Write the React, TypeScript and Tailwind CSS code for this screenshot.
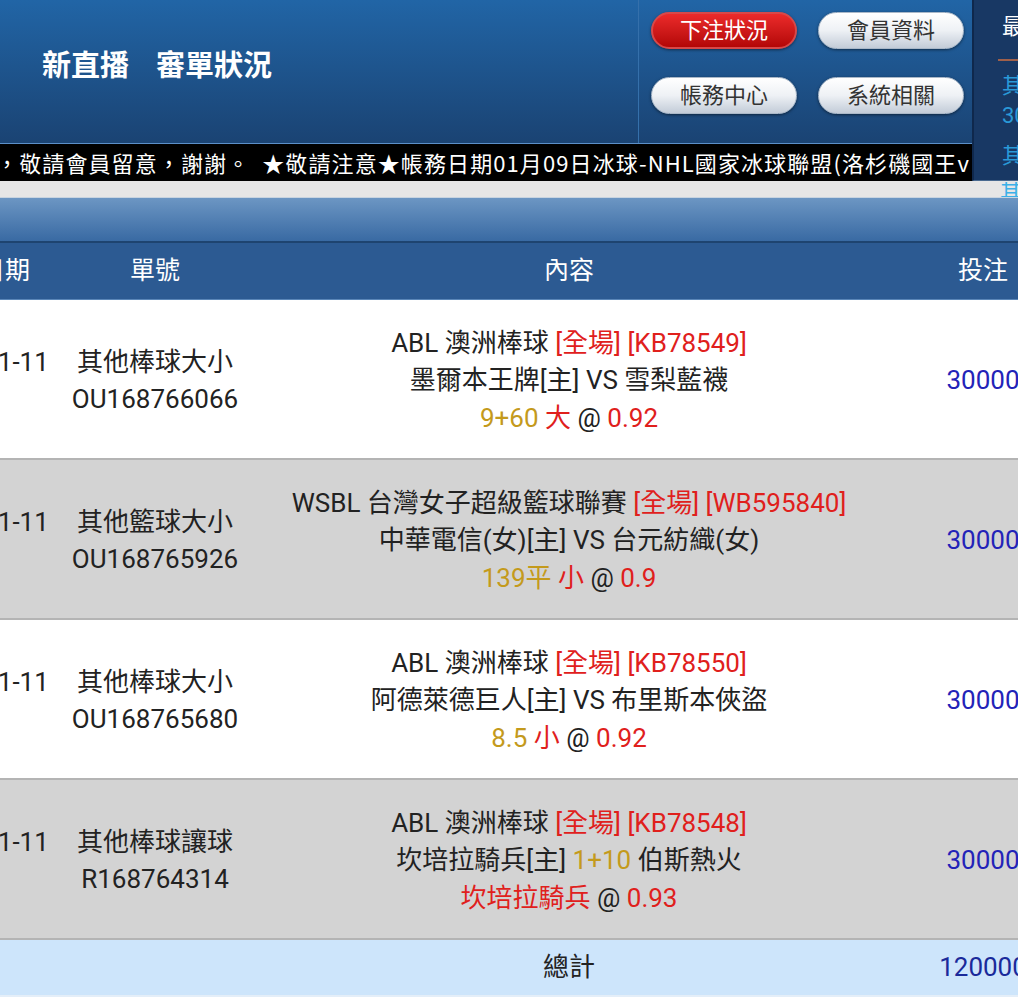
import type { ReactNode } from "react";

const gold = "text-[#c49a1c]";
const red = "text-[#e0201c]";

type Row = {
  date: string;
  type: string;
  no: string;
  league: string;
  code: string;
  teams: ReactNode;
  pick: ReactNode;
  amount: string;
  gray: boolean;
};

const rows: Row[] = [
  {
    date: "01-11",
    type: "其他棒球大小",
    no: "OU168766066",
    league: "ABL 澳洲棒球",
    code: "[KB78549]",
    teams: <>墨爾本王牌[主] VS 雪梨藍襪</>,
    pick: (
      <>
        <span className={gold}>9+60</span> <span className={red}>大</span> @{" "}
        <span className={red}>0.92</span>
      </>
    ),
    amount: "30000",
    gray: false,
  },
  {
    date: "01-11",
    type: "其他籃球大小",
    no: "OU168765926",
    league: "WSBL 台灣女子超級籃球聯賽",
    code: "[WB595840]",
    teams: <>中華電信(女)[主] VS 台元紡織(女)</>,
    pick: (
      <>
        <span className={gold}>139平</span> <span className={red}>小</span> @{" "}
        <span className={red}>0.9</span>
      </>
    ),
    amount: "30000",
    gray: true,
  },
  {
    date: "01-11",
    type: "其他棒球大小",
    no: "OU168765680",
    league: "ABL 澳洲棒球",
    code: "[KB78550]",
    teams: <>阿德萊德巨人[主] VS 布里斯本俠盜</>,
    pick: (
      <>
        <span className={gold}>8.5</span> <span className={red}>小</span> @{" "}
        <span className={red}>0.92</span>
      </>
    ),
    amount: "30000",
    gray: false,
  },
  {
    date: "01-11",
    type: "其他棒球讓球",
    no: "R168764314",
    league: "ABL 澳洲棒球",
    code: "[KB78548]",
    teams: (
      <>
        坎培拉騎兵[主] <span className={gold}>1+10</span> 伯斯熱火
      </>
    ),
    pick: (
      <>
        <span className={red}>坎培拉騎兵</span> @ <span className={red}>0.93</span>
      </>
    ),
    amount: "30000",
    gray: true,
  },
];

const grid = "grid grid-cols-[100px_190px_638px_174px]";

function PillButton({ label, active }: { label: string; active?: boolean }) {
  return (
    <button
      className={
        active
          ? "w-[146px] h-[37px] rounded-full border-2 border-[#d84848] bg-linear-to-b from-[#ec2a2a] to-[#b30606] text-white text-[22px] leading-none shadow-[0_1px_3px_rgba(0,0,0,0.5)]"
          : "w-[146px] h-[37px] rounded-full border border-[#aab8c8] bg-linear-to-b from-[#ffffff] via-[#eef1f5] to-[#c3ccd8] text-[#333] text-[22px] leading-none shadow-[0_1px_3px_rgba(0,0,0,0.5)]"
      }
    >
      {label}
    </button>
  );
}

export default function App() {
  return (
    <div className="w-[1018px] min-h-[1000px] overflow-hidden bg-white font-[family-name:Roboto,'Noto_Sans_CJK_TC',sans-serif]">
      {/* top header */}
      <div className="flex h-[181px]">
        <div className="w-[972px] flex flex-col">
          <div className="h-[143px] flex bg-linear-to-b from-[#2165a6] to-[#1a4373]">
            <div className="w-[639px] flex items-center gap-[27px] pl-[42px] pb-[16px] border-r border-[#3570ab] text-white text-[29px] font-bold font-[family-name:'Noto_Sans_CJK_TC',sans-serif]">
              <span>新直播</span>
              <span>審單狀況</span>
            </div>
            <div className="grid grid-cols-[146px_146px] gap-x-[21px] gap-y-[28px] pl-[12px] pt-[12px] content-start">
              <PillButton label="下注狀況" active />
              <PillButton label="會員資料" />
              <PillButton label="帳務中心" />
              <PillButton label="系統相關" />
            </div>
          </div>
          <div className="h-[38px] bg-black border-t border-[#5b8fc8] flex justify-end items-center overflow-hidden">
            <span className="whitespace-nowrap text-white text-[22px] tracking-[1.1px] pr-[2px] font-[family-name:'Noto_Sans_CJK_TC',sans-serif]">
              ，敬請會員留意，謝謝。&nbsp;&nbsp;★敬請注意★帳務日期01月09日冰球-NHL國家冰球聯盟(洛杉磯國王v
            </span>
          </div>
        </div>
        <div className="flex-1 bg-[#183864] border-l-2 border-[#0f284c] border-b border-b-[#4a6a90] overflow-hidden pl-[28px] text-[22px] whitespace-nowrap">
          <div className="text-white pt-[12px] leading-[30px]">最新</div>
          <div className="h-[2px] bg-[#a0604a] mt-[17px] -ml-[4px]" />
          <div className="text-[#2a9ad8] leading-[30px] mt-[10px]">其他</div>
          <div className="text-[#2a9ad8] leading-[30px]">30000</div>
          <div className="text-[#2a9ad8] leading-[30px] mt-[10px]">其他</div>
        </div>
      </div>

      {/* gray strip */}
      <div className="relative h-[17px] bg-[#e6e6e6] border-b border-[#c8d4e0] overflow-hidden">
        <span className="absolute left-[1000px] top-[1px] text-[22px] leading-[22px] text-[#3ab0e8] whitespace-nowrap">其他</span>
      </div>

      {/* title bar */}
      <div className="h-[45px] bg-linear-to-b from-[#6c96c3] to-[#396aa3] border-b-2 border-[#1e4470]" />

      <div className="-ml-[40px] w-[1102px]">
        {/* header row */}
        <div className={`${grid} h-[57px] items-center bg-[#2c5a92] border-b border-[#5a86b8] text-white text-[25px]`}>
          <div className="text-center pr-[10px]">日期</div>
          <div className="text-center">單號</div>
          <div className="text-center">內容</div>
          <div className="text-center pl-[16px]">投注</div>
        </div>

        {rows.map((r, i) => (
          <div
            key={i}
            className={`${grid} h-[160px] items-center pt-[4px] border-b-2 border-[#b4b4b4] text-[26px] leading-[37.5px] text-[#222] ${
              r.gray ? "bg-[#d3d3d3]" : "bg-white"
            }`}
          >
            <div className="text-center pl-[12px]">
              <div>{r.date}</div>
              <div>&nbsp;</div>
            </div>
            <div className="text-center">
              <div>{r.type}</div>
              <div>{r.no}</div>
            </div>
            <div className="text-center whitespace-nowrap">
              <div>
                {r.league} <span className={red}>[全場]</span> <span className={red}>{r.code}</span>
              </div>
              <div>{r.teams}</div>
              <div>{r.pick}</div>
            </div>
            <div className="text-center text-[#2323b8] pl-[16px]">{r.amount}</div>
          </div>
        ))}

        {/* total row */}
        <div className={`${grid} h-[57px] items-center bg-[#cde5fb] border-b-2 border-[#e4eef8] text-[26px] text-[#222]`}>
          <div />
          <div />
          <div className="text-center">總計</div>
          <div className="text-center text-[#1a2a9a] pl-[16px]">120000</div>
        </div>
      </div>
    </div>
  );
}
